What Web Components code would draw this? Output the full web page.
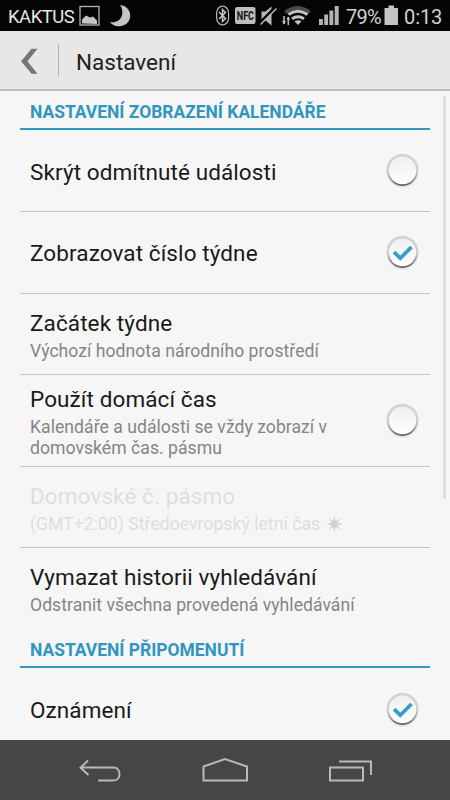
<!DOCTYPE html>
<html lang="cs"><head><meta charset="utf-8"><title>Nastavení</title>
<style>html,body{margin:0;height:100%;overflow:hidden;background:#f6f6f6;font-family:Roboto,"Noto Sans",sans-serif}</style></head>
<body>
<settings-screen></settings-screen>
<script>
const define=(name,html)=>customElements.define(name,class extends HTMLElement{
  constructor(){super();this.attachShadow({mode:'open'}).innerHTML=html;}
});

define('status-bar',`<style>
:host{display:flex;height:31px;background:#050505;color:#d2d2d2;align-items:center;box-sizing:border-box;padding:2px 7px 0 8px;font-size:20px;line-height:28px;white-space:nowrap}
svg{display:block;flex:none}
.name{width:71px;color:#e6e6e6;font-size:18.5px;letter-spacing:-.5px}
.gap{flex:1}.pct{width:38px;letter-spacing:-.7px}.time{width:39px;margin-left:5px;letter-spacing:-.1px}
</style>
<span class="name">KAKTUS</span>
<svg width="56" height="29" viewBox="79 2 56 29"><rect x="80" y="6.5" width="19" height="18.5" fill="none" stroke="#b5b5b5" stroke-width="1.3"/><path d="M82 23.5v-4l4-4 2 1 2 1 3-1 4 4v3.5z" fill="#c4c4c4"/><path d="M120 5c13 1 14 19 1 21-5 1-9-1-11-4 10 2 16-8 10-17z" fill="#c4c4c4"/></svg>
<span class="gap"></span>
<svg width="131" height="29" viewBox="215 2 131 29"><rect x="216.6" y="6.2" width="12" height="18.6" rx="6" ry="7" fill="none" stroke="#b5b5b5" stroke-width="1.2"/><path d="M219 12l6.500 6.500-3 3V9.500l3 3-6.500 6.500" fill="none" stroke="#c5c5c5" stroke-width="1.5"/>
<rect x="235" y="7" width="20.500" height="17" rx="2" fill="#bdbdbd"/><text x="236.8" y="20.4" font-family="Roboto" font-weight="700" font-size="13" textLength="17.2" lengthAdjust="spacingAndGlyphs" fill="#141414">NFC</text>
<path d="M261.5 11.500h4l6-5v19l-6-5h-4z" fill="#b8b8b8"/><path d="M260 22.500L275 7.500" stroke="#050505" stroke-width="2.5"/><path d="M260.500 24.500L276.500 8.500" stroke="#bcbcbc" stroke-width="1.500"/>
<path d="M285.500 12.500q12-9 24 0" stroke="#4a4a4a" stroke-width="4" fill="none"/><path d="M288.500 14.500q9-6.500 19 0M292 18.800q6-4 12 0" stroke="#c4c4c4" stroke-width="2.900" fill="none"/><path d="M294.500 21.200q3.500-2 7 0L298 25z" fill="#c4c4c4"/><path d="M284 16v8M288.300 17.500V25" stroke="#c4c4c4" stroke-width="1.500"/><path d="M282 21h4l-2 3.500zM286.300 19.500h4l-2-3z" fill="#c4c4c4"/>
<path d="M319 19h3.900v6H319zM324.200 14.500h3.900V25h-3.900zM329.400 10.500h3.900V25h-3.900zM334.700 6h4v19h-4z" fill="#b5b5b5"/></svg>
<span class="pct">79%</span>
<svg width="15" height="29" viewBox="384 2 15 29"><path d="M384.500 8h4V5.500h5.500V8h4v17h-13.500z" fill="#c4c4c4"/></svg>
<span class="time">0:13</span>`);

define('title-bar',`<style>
:host{display:flex;height:60px;box-sizing:border-box;align-items:center;background:#e7e7e7;border-bottom:2px solid #c0c0c0;padding-left:19px;color:#202020}
i{width:1px;height:33px;background:#b4b4b4;margin:0 17px 0 19px}
span{font-size:22.5px;line-height:30px;padding-top:3px}
svg{margin-top:2px}</style>
<svg width="20" height="28" viewBox="19 47 20 28"><path d="M37.5 48.700L27.500 61.200 37.500 73.700h-6L21 61.200l10.500-12.500z" fill="#777"/></svg><i></i><span><slot></slot></span>`);

define('section-heading',`<style>
:host{display:block;box-sizing:border-box;height:39px;border-bottom:2px solid #3399c0;padding:11px 10px 0;color:#3096bf;font-size:17.45px;font-weight:700;line-height:20px;white-space:nowrap}
</style><slot></slot>`);

define('round-check',`<style>:host{display:block;width:36px;height:36px;margin-bottom:3px}path{display:none}:host([checked]) path{display:block}svg{display:block}</style>
<svg width="36" height="36" viewBox="0 0 36 36"><defs>
<linearGradient id="r" x2="0" y2="1"><stop stop-color="#d0d0d0"/><stop offset=".5" stop-color="#c6c6c6"/><stop offset="1" stop-color="#5c5c5c"/></linearGradient>
<linearGradient id="f" x2="0" y2="1"><stop stop-color="#efefef"/><stop offset="1" stop-color="#fefefe"/></linearGradient>
<filter id="b" x="-.3" y="-.3" width="1.6" height="1.6"><feGaussianBlur stdDeviation="1.3"/></filter></defs>
<circle cx="17.5" cy="20" r="14.5" fill="#aaa" filter="url(#b)" opacity=".65"/><circle cx="17.5" cy="17.8" r="16" fill="#d4d4d4"/><circle cx="17.500" cy="19" r="14.9" fill="url(#r)"/><circle cx="17.500" cy="18.4" r="13.8" fill="url(#f)"/>
<path d="M9.100 18.200l6.200 6L26.500 13" fill="none" stroke="#319fca" stroke-width="3.700"/></svg>`);

define('setting-row',`<style>
:host{display:flex;box-sizing:border-box;height:var(--h,81px);border-bottom:1px solid #c4c4c4;padding:var(--shift,2px) 9px 0 10px;align-items:center;justify-content:space-between;color:#1a1a1a;white-space:nowrap}
:host([last]){border-color:transparent}
:host([disabled]){color:#dedede;--sub:#dedede}
.t{font-size:22.5px;line-height:28px;letter-spacing:.1px}
.s{font-size:17.6px;line-height:21px;color:var(--sub,#858585);letter-spacing:.03px}
.s ::slotted(*){display:block}
.s ::slotted(.lead){margin-top:4px}
</style><div><div class="t"><slot></slot></div><div class="s"><slot name="sub"></slot></div></div><slot name="control"></slot>`);

define('sun-mark',`<style>:host{display:inline-block;width:15px;height:16px;vertical-align:-2px;margin-left:2px}svg{display:block}</style>
<svg width="15" height="16" viewBox="0 0 16 16" stroke="#d3d3d3" stroke-width="1.4"><circle cx="8" cy="8" r="4" fill="#cecece" stroke="none"/><path d="M8 .5v15M.5 8h15M2.700 2.700l10.600 10.600M13.300 2.700l-10.600 10.600"/></svg>`);

define('nav-bar',`<style>:host{display:flex;height:60px;background:#464646;justify-content:space-between;align-items:center;padding:0 76px 0 78px}svg{fill:none;stroke:#b9b9b9;stroke-width:2}</style>
<svg width="44" height="30" viewBox="78 756 44 30"><path d="M88 761.500l-7.500 7.300 8 7.200M81 768.500h32.500c8 0 8 13 0 13H98"/></svg>
<svg width="48" height="30" viewBox="201 756 48 30"><path d="M203.500 781.500v-14L225 760l22 7.500v14z"/></svg>
<svg width="46" height="30" viewBox="329 756 46 30"><path d="M331 768.500h33v13h-33zM340 762.500h32V776"/></svg>`);

define('settings-screen',`<style>
:host{display:flex;flex-direction:column;width:450px;height:800px}
main{flex:1;display:flex;min-height:0;overflow:hidden;background:#f6f6f6}
.list{flex:1;margin-left:20px}
.scroll{width:3px;height:403px;margin:5px 4px 0 13px;background:#dedede;flex:none;border-radius:1px}
</style>
<status-bar></status-bar><title-bar>Nastavení</title-bar>
<main><div class="list">
<section-heading>NASTAVENÍ ZOBRAZENÍ KALENDÁŘE</section-heading>
<setting-row style="--h:82px">Skrýt odmítnuté události<round-check slot="control"></round-check></setting-row>
<setting-row style="--h:82px;--shift:1px">Zobrazovat číslo týdne<round-check slot="control" checked></round-check></setting-row>
<setting-row>Začátek týdne<span class="lead" slot="sub">Výchozí hodnota národního prostředí</span></setting-row>
<setting-row style="--h:92px">Použít domácí čas<span class="lead" slot="sub">Kalendáře a události se vždy zobrazí v</span><span slot="sub">domovském čas. pásmu</span><round-check slot="control"></round-check></setting-row>
<setting-row disabled>Domovské č. pásmo<span class="lead" slot="sub">(GMT+2:00) Středoevropský letní čas <sun-mark></sun-mark></span></setting-row>
<setting-row last>Vymazat historii vyhledávání<span class="lead" slot="sub">Odstranit všechna provedená vyhledávání</span></setting-row>
<section-heading>NASTAVENÍ PŘIPOMENUTÍ</section-heading>
<setting-row style="--h:82px;--shift:3px">Oznámení<round-check slot="control" checked></round-check></setting-row>
</div><div class="scroll"></div></main>
<nav-bar></nav-bar>`);
</script></body></html>
